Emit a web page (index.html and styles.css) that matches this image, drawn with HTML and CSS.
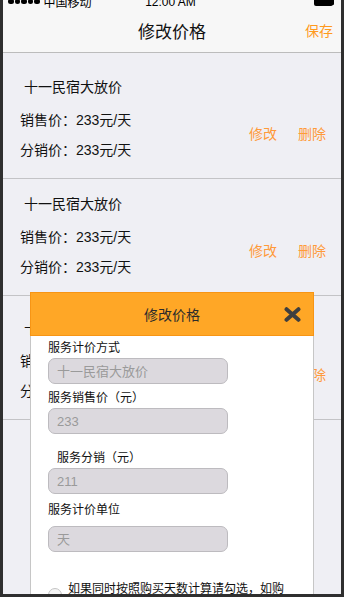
FILE: index.html
```html
<!DOCTYPE html>
<html lang="zh">
<head>
<meta charset="utf-8">
<title>修改价格</title>
<link rel="stylesheet" href="styles.css">
</head>
<body>
<div class="screen">
  <div class="content">
    <div class="status">
      <div class="carrier">
        <span class="dots"><i></i><i></i><i></i><i></i><i></i></span>
        <span>中国移动</span>
      </div>
      <div class="time">12:00 AM</div>
      <div class="battery-wrap"><span class="battery"></span></div>
    </div>
    <header class="nav">
      <span></span>
      <h1 class="nav-title">修改价格</h1>
      <a class="nav-save">保存</a>
    </header>
    <div class="list">
      <div class="item item-first">
        <div class="item-title">十一民宿大放价</div>
        <div class="item-row">销售价：233元/天</div>
        <div class="item-row">分销价：233元/天</div>
        <div class="item-actions"><a>修改</a><a>删除</a></div>
      </div>
      <div class="item item-tight">
        <div class="item-title">十一民宿大放价</div>
        <div class="item-row">销售价：233元/天</div>
        <div class="item-row">分销价：233元/天</div>
        <div class="item-actions"><a>修改</a><a>删除</a></div>
      </div>
      <div class="item">
        <div class="item-title">十一民宿大放价</div>
        <div class="item-row">销售价：233元/天</div>
        <div class="item-row">分销价：233元/天</div>
        <div class="item-actions"><a>修改</a><a>删除</a></div>
      </div>
    </div>
  </div>

  <div class="modal">
    <div class="modal-head">
      <span class="modal-title">修改价格</span>
      <svg class="modal-close" width="17" height="15" viewBox="0 0 17 15" aria-label="关闭">
        <path d="M2.5 2.2 L14.5 12.8 M14.5 2.2 L2.5 12.8" stroke="#3f3f3f" stroke-width="4" stroke-linecap="round" fill="none"/>
      </svg>
    </div>
    <div class="modal-body">
      <label class="field-label">服务计价方式</label>
      <input class="field-input" placeholder="十一民宿大放价">
      <label class="field-label">服务销售价（元）</label>
      <input class="field-input" placeholder="233">
      <label class="field-label field-label-indent">服务分销（元）</label>
      <input class="field-input" placeholder="211">
      <label class="field-label field-label-gap">服务计价单位</label>
      <input class="field-input" placeholder="天">
      <div class="check-row">
        <span class="radio"></span>
        <span class="check-text">如果同时按照购买天数计算请勾选，如购买3天则价格乘以3</span>
      </div>
    </div>
  </div>
</div>
</body>
</html>
```

FILE: styles.css
```css
html, body {
  margin: 0;
  padding: 0;
  height: 597px;
  overflow: hidden;
  background: #2f2f2f;
  font-family: "Liberation Sans", "Noto Sans CJK SC", sans-serif;
}

.screen {
  position: relative;
  margin: 0 3px;
  height: 594px;
  overflow: hidden;
  background: #efeff4;
}

.content {
  margin-top: -12px;
}

/* status bar */
.status {
  height: 20px;
  box-sizing: border-box;
  padding: 5px 8px 0 5px;
  background: #f7f7f7;
  display: grid;
  grid-template-columns: 1fr auto 1fr;
  align-items: center;
  font-size: 12px;
  color: #000;
}

.carrier {
  display: flex;
  align-items: center;
  gap: 4px;
}

.dots {
  display: flex;
  gap: 1px;
}

.dots i {
  width: 5.5px;
  height: 5.5px;
  border-radius: 50%;
  background: #000;
}

.time {
  text-align: center;
}

.battery-wrap {
  display: flex;
  justify-content: flex-end;
}

.battery {
  width: 19px;
  height: 8px;
  border-radius: 2px;
  background: #000;
  box-shadow: 2px 0 0 -1px #000;
}

/* nav bar */
.nav {
  height: 44px;
  background: #f7f7f7;
  border-bottom: 1px solid #bcbcbc;
  display: grid;
  grid-template-columns: 1fr auto 1fr;
  align-items: center;
  padding: 0 8px;
}

.nav-title {
  margin: 0;
  font-size: 17px;
  font-weight: normal;
  color: #111;
}

.nav-save {
  justify-self: end;
  font-size: 14px;
  color: #ff9a1e;
}

/* list */
.item {
  display: grid;
  grid-template-columns: 1fr auto;
  grid-template-rows: 28px 30px 30px;
  padding: 22px 15px 13px 17px;
  border-bottom: 1px solid #c3c3c6;
  font-size: 14px;
  color: #111;
}

.item-first {
  padding-top: 24px;
}

.item-tight {
  padding-top: 15px;
}

.item-title {
  grid-column: 1 / 3;
  grid-row: 1;
  line-height: 20px;
  padding-left: 4px;
}

.item-row {
  grid-column: 1;
  line-height: 30px;
}

.item-actions {
  grid-column: 2;
  grid-row: 2 / 4;
  align-self: center;
  display: flex;
  gap: 21px;
  margin-bottom: 4px;
  color: #ff9a3a;
}

/* modal */
.modal {
  position: absolute;
  top: 292px;
  left: 27px;
  width: 284px;
  bottom: -40px;
  background: #fff;
}

.modal-head {
  height: 44px;
  box-sizing: border-box;
  background: #ffa726;
  border: 1px solid #f79515;
  display: flex;
  align-items: center;
  justify-content: center;
  position: relative;
}

.modal-title {
  font-size: 14px;
  color: #2b2b2b;
}

.modal-close {
  position: absolute;
  right: 12px;
  top: 14px;
}

.modal-body {
  box-sizing: border-box;
  height: calc(100% - 44px);
  border-left: 1px solid #c6c6c6;
  border-right: 1px solid #c6c6c6;
  padding: 4px 0 0 17px;
  display: flex;
  flex-direction: column;
  align-items: flex-start;
}

.field-label {
  font-size: 12px;
  line-height: 16px;
  color: #111;
  margin-bottom: 2px;
}

.field-label-indent {
  padding-left: 9px;
  margin-top: 10px;
}

.field-label-gap {
  margin-top: 2px;
  margin-bottom: 8px;
}

.field-input {
  box-sizing: border-box;
  width: 180px;
  height: 26px;
  margin: 0 0 6px;
  padding: 0 0 0 8px;
  border: 1px solid #bdbbbf;
  border-radius: 7px;
  background: #dcd9de;
  font-family: "Liberation Sans", "Noto Sans CJK SC", sans-serif;
  font-size: 13px;
  color: #999;
  outline: none;
}

.field-input::placeholder {
  color: #9a9a9a;
}

.check-row {
  margin-top: 22px;
  display: flex;
  align-items: flex-start;
  gap: 6px;
}

.radio {
  width: 12px;
  height: 12px;
  margin-top: 8px;
  border: 1px solid #c4c4c4;
  border-radius: 50%;
  background: #f4f4f4;
  flex: none;
}

.check-text {
  width: 224px;
  font-size: 12px;
  line-height: 18px;
  color: #111;
}
```
